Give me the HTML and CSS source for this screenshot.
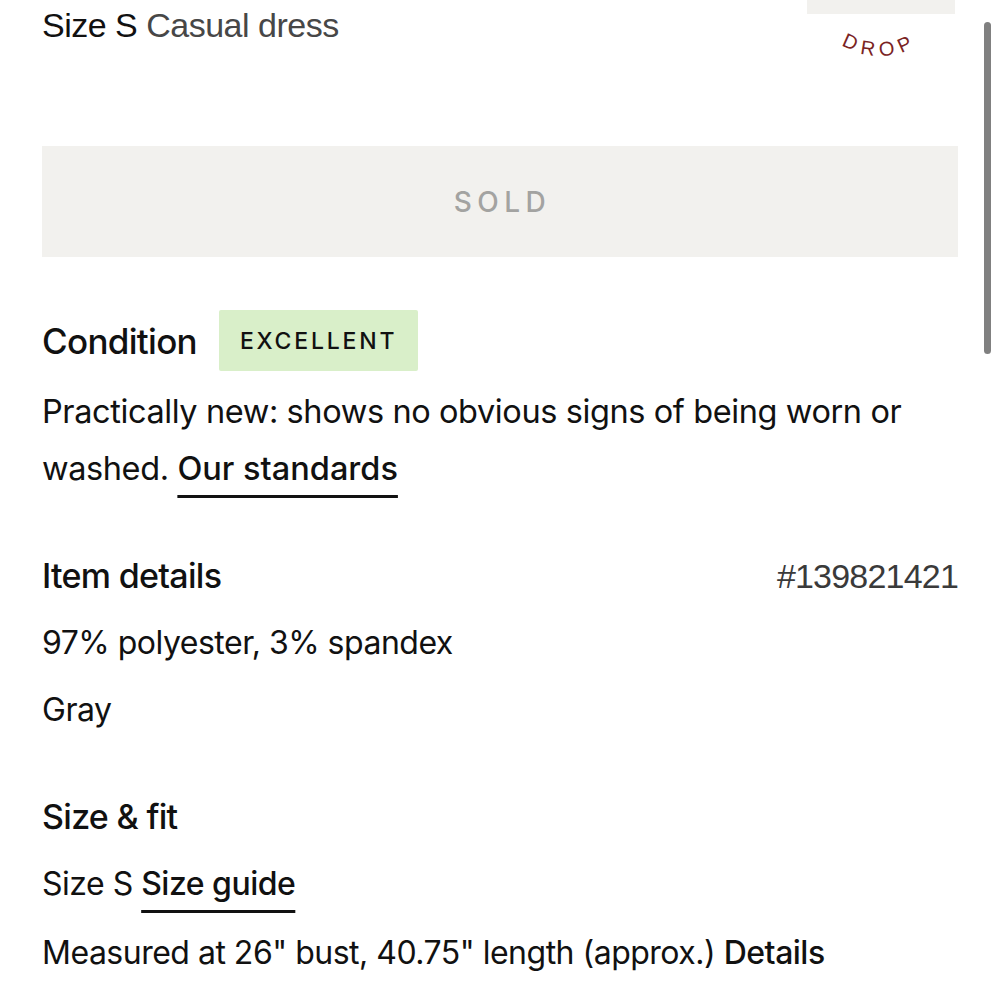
FILE: index.html
```html
<!DOCTYPE html>
<html lang="en">
<head>
<meta charset="utf-8">
<title>Item</title>
<link rel="stylesheet" href="styles.css">
</head>
<body>
<div class="page">
  <header class="header">
    <h1 class="title"><span class="size">Size S</span> <span class="kind">Casual dress</span></h1>
    <div class="brand">
      <div class="thumb"></div>
      <svg class="drop" width="148" height="50" viewBox="0 0 148 50" aria-label="DROP">
        <defs><path id="arc" d="M20 19 Q73 61 126 19"/></defs>
        <text class="drop-text"><textPath href="#arc" startOffset="50%" text-anchor="middle">DROP</textPath></text>
      </svg>
    </div>
  </header>

  <div class="sold">SOLD</div>

  <section class="condition">
    <div class="condition-head">
      <h2 class="heading">Condition</h2>
      <span class="grade">EXCELLENT</span>
    </div>
    <p class="desc">Practically new: shows no obvious signs of being worn or<br>washed. <a class="link" href="#">Our standards</a></p>
  </section>

  <section class="details">
    <div class="row">
      <h2 class="heading">Item details</h2>
      <span class="sku">#139821421</span>
    </div>
    <p class="line">97% polyester, 3% spandex</p>
    <p class="line">Gray</p>
  </section>

  <section class="fit">
    <h2 class="heading">Size &amp; fit</h2>
    <p class="line">Size S <a class="link" href="#">Size guide</a></p>
    <p class="line line-last">Measured at 26" bust, 40.75" length (approx.) <a class="link" href="#">Details</a></p>
  </section>
</div>
<div class="scrollbar"></div>
</body>
</html>
```

FILE: styles.css
```css
* { box-sizing: border-box; }
html, body { margin: 0; padding: 0; background: #fff; }
body {
  font-family: Inter, "Noto Sans", sans-serif;
  color: #111;
  overflow: hidden;
}
.page { padding: 0 42px; }

.header {
  display: flex;
  justify-content: space-between;
  align-items: flex-start;
}
.title {
  margin: 0;
  padding-top: 5px;
  font-family: "Liberation Sans", Arial, sans-serif;
  font-weight: 400;
  font-size: 34px;
  line-height: 40px;
  letter-spacing: -0.5px;
}
.size { color: #111; }
.kind { color: #474747; }

.brand { width: 148px; margin-right: 3px; }
.thumb { height: 14px; background: #f2f1ee; }
.drop { display: block; margin-top: 2px; }
.drop-text {
  font-family: "Liberation Sans", Arial, sans-serif;
  font-size: 20px;
  letter-spacing: 6px;
  fill: #7a2323;
}

.sold {
  margin-top: 80px;
  height: 111px;
  background: #f2f1ee;
  display: flex;
  align-items: center;
  justify-content: center;
  font-size: 28px;
  letter-spacing: 5.5px;
  color: #a3a3a1;
  font-weight: 500;
  padding-left: 5px;
}

.condition { margin-top: 53px; }
.condition-head {
  display: flex;
  align-items: center;
  gap: 22px;
}
.heading {
  margin: 0;
  font-size: 34px;
  line-height: 44px;
  font-weight: 500;
  letter-spacing: -0.7px;
}
.condition .heading { font-size: 35px; }
.grade {
  height: 61px;
  padding: 0 21px;
  display: flex;
  align-items: center;
  background: #d9efc9;
  border-radius: 2px;
  font-size: 23px;
  font-weight: 500;
  letter-spacing: 2.8px;
}
.desc {
  margin: 12px 0 0;
  font-size: 32.5px;
  line-height: 57px;
  letter-spacing: -0.4px;
}
.link {
  color: #111;
  font-weight: 500;
  text-decoration: underline;
  text-decoration-thickness: 2.5px;
  text-underline-offset: 15px;
}
.desc .link { letter-spacing: 0; }

.details { margin-top: 57px; }
.row {
  display: flex;
  justify-content: space-between;
  align-items: baseline;
}
.sku {
  font-family: "Liberation Sans", Arial, sans-serif;
  font-size: 34px;
  color: #3a3a3a;
  letter-spacing: -0.8px;
}
.line {
  margin: 0;
  font-size: 32px;
  line-height: 40px;
  letter-spacing: -0.5px;
  margin-top: 27px;
}
.details .row + .line { margin-top: 25px; }

.fit { margin-top: 65px; }
.fit .line { margin-top: 25px; }
.fit .line-last { margin-top: 29px; }

.scrollbar {
  position: fixed;
  left: 984px;
  top: 22px;
  width: 7px;
  height: 332px;
  border-radius: 4px;
  background: #808080;
}
```
